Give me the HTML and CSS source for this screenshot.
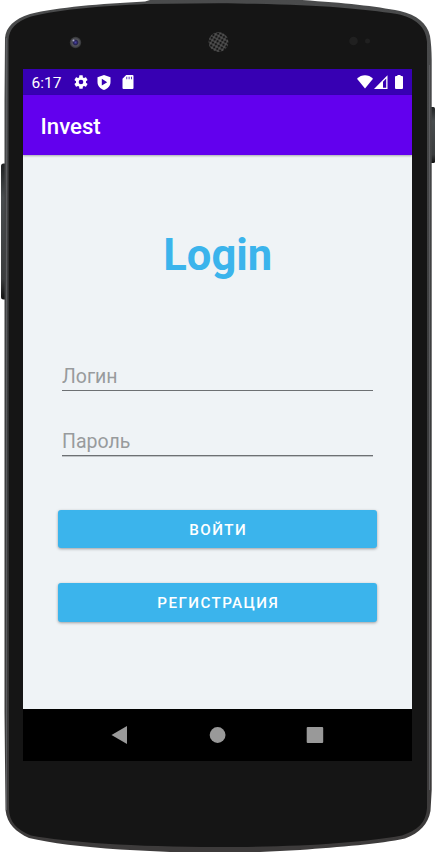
FILE: index.html
```
<!DOCTYPE html>
<html lang="ru">
<head>
<meta charset="utf-8">
<title>Invest</title>
<link rel="stylesheet" href="styles.css">
</head>
<body>
<div class="phone">
  <svg class="phone-body" width="436" height="852" viewBox="0 0 436 852" aria-hidden="true">
    <defs>
      <linearGradient id="rim" x1="0" x2="0" y1="0" y2="1">
        <stop offset="0" stop-color="#4a4b4c"/><stop offset=".5" stop-color="#3b3c3d"/><stop offset="1" stop-color="#3d3b3b"/>
      </linearGradient>
      <linearGradient id="key" x1="0" x2="0" y1="0" y2="1">
        <stop offset="0" stop-color="#202223"/><stop offset=".25" stop-color="#484c4e"/><stop offset=".85" stop-color="#3a3c3d"/><stop offset="1" stop-color="#111"/>
      </linearGradient>
      <radialGradient id="lens"><stop offset="0" stop-color="#4b43a8"/><stop offset=".38" stop-color="#25224e"/><stop offset=".6" stop-color="#55565c"/><stop offset="1" stop-color="#303133"/></radialGradient>
      <pattern id="mesh" width="3.400" height="3.400" patternUnits="userSpaceOnUse" patternTransform="rotate(30)"><rect width="3.400" height="3.400" fill="#505050"/><circle cx="1.700" cy="1.700" r="1.300" fill="#151515"/></pattern>
    </defs>
    <rect x="1" y="163.500" width="6" height="136" rx="2.500" fill="url(#key)"/>
    <rect x="429" y="107" width="6" height="56" rx="1.500" fill="url(#key)"/>
    <path fill="url(#rim)" d="M5 38C6 27 14 19 30 14C58 7 100 4 145 1.500L150 0H302C345 3 375 6 400 11C417 15 427 23 430 36Q431.500 45 431.700 60V790L430.500 811C428 824 420 833 405 838.500C380 844 340 847 300 850L260 852H170L120 849.500C82 847 50 843 29 838C16 832 7 824 5.500 810L4.500 712V100Z"/>
    <path fill="#5c5d60" d="M6 38V810H7V38ZM429 65V790H430V65Z"/>
    <path fill="#151515" d="M8.500 40C9 29 16 21.500 31 16.500C60 9 105 6 145 4L218 3.200C310 4 358 8 397 14C416 18 426 27 427 42V808C426 823 418 830 402 835.500C360 843 300 847 218 847C135 847 65 842 31 835.500C17 830 9 822 9 808Z"/>
    <circle cx="75.500" cy="42.500" r="5.700" fill="url(#lens)"/>
    <circle cx="73.500" cy="40.500" r="1" fill="#aaa9c8"/>
    <circle cx="218.500" cy="42" r="10" fill="url(#mesh)"/>
    <circle cx="353.500" cy="41" r="4.300" fill="#202020"/>
    <circle cx="367.500" cy="41" r="2.500" fill="#202020"/>
  </svg>
  <main class="screen">
    <div class="status-bar">
      <span class="clock">6:17</span>
      <svg class="gear" width="16" height="16" viewBox="0 0 24 24"><path d="M19.430 12.980c.04-.32.070-.64.070-.98s-.03-.66-.07-.98l2.110-1.650c.19-.15.24-.42.120-.64l-2-3.460c-.12-.22-.39-.3-.61-.22l-2.490 1c-.52-.4-1.080-.73-1.690-.98l-.38-2.650C14.460 2.180 14.250 2 14 2h-4c-.25 0-.46.180-.49.420l-.38 2.650c-.61.250-1.170.590-1.690.980l-2.490-1c-.23-.09-.49 0-.61.220l-2 3.460c-.13.220-.07.490.120.640l2.110 1.650c-.04.320-.07.650-.07.980s.030.660.070.980l-2.110 1.650c-.19.150-.24.420-.12.640l2 3.460c.12.220.390.300.610.220l2.490-1c.52.400 1.080.730 1.690.980l.38 2.650c.030.240.240.420.490.420h4c.25 0 .46-.18.490-.42l.38-2.650c.61-.25 1.170-.59 1.690-.98l2.490 1c.23.090.490 0 .61-.22l2-3.460c.12-.22.070-.49-.12-.64zM12 15.500A3.500 3.500 0 1 1 12 8.500a3.500 3.500 0 0 1 0 7z"/></svg>
      <svg class="shield" width="14" height="15" viewBox="0 0 14 15"><path fill-rule="evenodd" d="M7 0 13.500 2.200V7C13.500 11 10.700 13.700 7 15 3.300 13.700.5 11 .5 7V2.200ZM4.800 3.800V10.600L10.200 7.200Z"/></svg>
      <svg class="sd" width="12" height="14" viewBox="0 0 12 14"><path fill-rule="evenodd" d="M4.200 0H10.500Q11.500 0 11.500 1V13Q11.500 14 10.500 14H1.500Q.5 14 .5 13V3.700ZM4.400 1.800V4.300H5.200V1.800ZM6.700 1.800V4.300H7.500V1.800ZM9 1.800V4.300H9.800V1.800Z"/></svg>
      <svg class="wifi" width="16" height="14" viewBox="0 0 16 14"><path d="M0 3.700C4.500-.9 11.500-.9 16 3.700L8 13.500Z"/></svg>
      <svg class="signal" width="14" height="14" viewBox="0 0 14 14"><path fill-rule="evenodd" d="M0 14 13.500.3V14ZM9 6.700V12.700H12.200V3.500Z"/></svg>
      <svg class="battery" width="8" height="14" viewBox="0 0 8 14"><path d="M2.400 0H5.600V1H7Q8 1 8 2V13Q8 14 7 14H1Q0 14 0 13V2Q0 1 1 1H2.400Z"/></svg>
    </div>
    <header class="app-bar">Invest</header>
    <form class="login">
      <h1>Login</h1>
      <input class="field" type="text" placeholder="Логин">
      <input class="field" type="password" placeholder="Пароль">
      <button class="button" type="button">ВОЙТИ</button>
      <button class="button" type="button">РЕГИСТРАЦИЯ</button>
    </form>
    <nav class="nav-bar">
      <svg width="18" height="18" viewBox="0 0 18 18"><path d="M16 0V18L.5 9Z"/></svg>
      <svg width="18" height="18" viewBox="0 0 18 18"><circle cx="8.600" cy="9" r="7.900"/></svg>
      <svg width="18" height="18" viewBox="0 0 18 18"><rect x=".7" y="1" width="16.500" height="16" rx="1"/></svg>
    </nav>
  </main>
</div>
</body>
</html>
```

FILE: styles.css
```
* { box-sizing: border-box; }
body { margin: 0; background: #fff; font-family: Roboto, sans-serif; overflow: hidden; }
.phone { position: relative; width: 436px; height: 852px; padding: 69px 24px 91px 23px; }
.phone-body { position: absolute; inset: 0; }
.screen { position: relative; display: flex; flex-direction: column; height: 692px; background: #eff3f6; }
.status-bar { display: flex; align-items: center; height: 26px; padding: 0 9px 0 8.500px; background: #3700b3; color: #fff; }
.status-bar svg { flex: none; fill: #fff; }
.clock { width: 41px; font-size: 15.500px; line-height: 26px; padding-top: 1px; }
.shield { margin-left: 8px; }
.sd { margin-left: 11px; }
.wifi { margin-left: auto; }
.signal { margin-left: 1px; }
.battery { margin-left: 7.500px; }
.app-bar { position: relative; height: 60px; padding: 1px 0 0 17.500px; background: #6200ee; color: #fff; font-size: 22.200px; font-weight: 500; line-height: 60px; box-shadow: 0 1px 2px rgba(0, 0, 0, .3); }
.login { display: flex; flex-direction: column; height: 554px; padding: 0 35px 0 34.500px; }
h1 { margin: 75px 0 76px; padding-left: 1px; color: #3bb4ec; font-size: 43.500px; font-weight: 700; line-height: 52px; text-align: center; }
.field { height: 33px; margin: 0 4px 32px 4.500px; padding: 5px 0 0; border: 0; border-bottom: 1px solid #6d7073; border-radius: 0; outline: 0; background: transparent; font: 19.500px/27px Roboto, sans-serif; }
.field::placeholder { color: #989b9d; opacity: 1; }
.field[type="password"] { margin-bottom: 33.500px; box-shadow: 0 1px 0 #c0c4c7; }
.button { height: 38.500px; margin: 20px 0 15px; padding: 2px 0 0 2px; border: 0; border-radius: 3px; background: #3bb4ec; color: #fff; font: 500 15.200px/20px Roboto, sans-serif; letter-spacing: 1.400px; box-shadow: 0 1px 3px rgba(0, 0, 0, .35); }
.button + .button { padding-top: 1px; }
.nav-bar { display: flex; align-items: center; justify-content: space-between; height: 52px; padding: 0 88px; background: #000; }
.nav-bar svg { fill: #999; }
```
